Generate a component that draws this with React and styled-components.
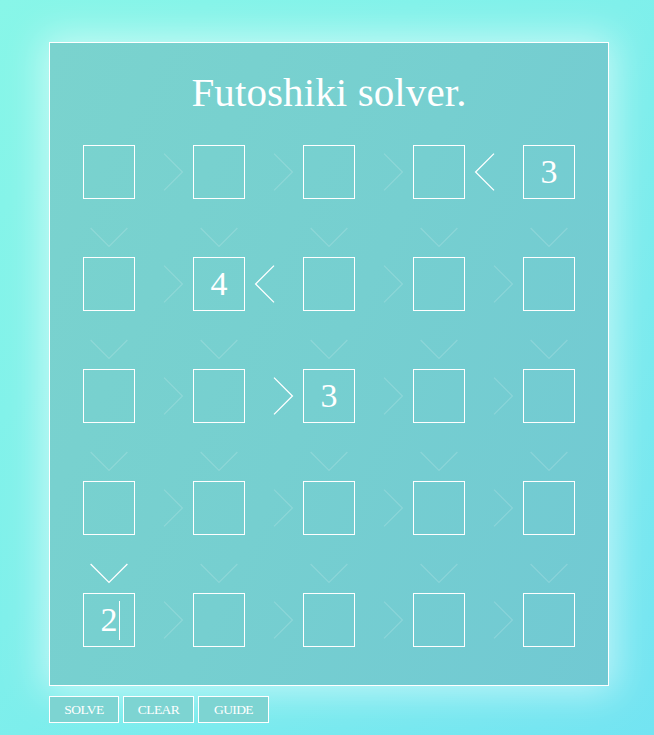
import styled, { createGlobalStyle } from 'styled-components';

const GlobalStyle = createGlobalStyle`
html, body {
    margin: 0;
    min-height: 100%;
}
body {
    min-height: 100vh;
    background: linear-gradient(135deg, #88f6e8 0%, #7ff0eb 45%, #73e4f2 100%);
    font-family: "Liberation Serif", "Times New Roman", serif;
    color: #fff;
}
`;

const Wrapper = styled.div`
padding: 42px 0 12px 49px;
`,
    Panel = styled.div`
width: 558px;
border: 1px solid #fff;
background: linear-gradient(115deg, #7ad3ce 0%, #76cfd0 50%, #71c9d3 100%);
box-shadow: 0 0 36px 6px rgba(255, 255, 255, 0.55);
padding: 29px 0 38px;
`,
    Title = styled.h1`
margin: 0 0 33px;
text-align: center;
font-weight: 400;
font-size: 41px;
line-height: 40px;
letter-spacing: 0.1px;
`,
    Board = styled.div`
display: grid;
grid-template-columns: repeat(4, 52px 58px) 52px;
grid-template-rows: repeat(4, 54px 58px) 54px;
justify-content: center;
`,
    Cell = styled.div`
box-sizing: border-box;
border: 1px solid #fff;
display: flex;
align-items: center;
justify-content: center;
font-size: 34px;
line-height: 34px;
`,
    Caret = styled.span`
display: inline-block;
width: 1px;
height: 39px;
margin-left: 1px;
margin-right: -2px;
background: #fff;
`,
    Link = styled.div`
display: flex;
align-items: center;
justify-content: center;
svg {
    display: block;
    stroke: #fff;
    stroke-width: 1.3;
    fill: none;
    opacity: ${props => (props.$active ? 1 : 0.16)};
}
`,
    Empty = styled.div``,
    Buttons = styled.div`
display: flex;
gap: 4px;
margin-top: 10px;
`,
    Button = styled.button`
box-sizing: border-box;
width: ${props => props.$w}px;
height: 27px;
padding: 0;
border: 1.5px solid #fff;
background: #7dd4d2;
color: #fff;
font-family: "Liberation Serif", "Times New Roman", serif;
font-size: 13.5px;
letter-spacing: -0.6px;
text-transform: uppercase;
cursor: pointer;
`;

const values = [
    ['', '', '', '', '3'],
    ['', '4', '', '', ''],
    ['', '', '3', '', ''],
    ['', '', '', '', ''],
    ['2', '', '', '', ''],
];

// horizontal links: '>' '<' ; active marks which is on
const hLinks = [
    [['>', 0], ['>', 0], ['>', 0], ['<', 1]],
    [['>', 0], ['<', 1], ['>', 0], ['>', 0]],
    [['>', 0], ['>', 1], ['>', 0], ['>', 0]],
    [['>', 0], ['>', 0], ['>', 0], ['>', 0]],
    [['>', 0], ['>', 0], ['>', 0], ['>', 0]],
];

const vLinks = [
    [0, 0, 0, 0, 0],
    [0, 0, 0, 0, 0],
    [0, 0, 0, 0, 0],
    [1, 0, 0, 0, 0],
];

function Chevron({ dir, active, horizontal }) {
    if (horizontal) {
        const pts = dir === '>' ? '29,8.6 47.4,27 29,45.4' : '29,8.6 10.6,27 29,45.4';
        return (
            <Link $active={active}>
                <svg width="58" height="54" viewBox="0 0 58 54"><polyline points={pts} /></svg>
            </Link>
        );
    }
    return (
        <Link $active={active}>
            <svg width="52" height="58" viewBox="0 0 52 58"><polyline points="7.6,29 26,47.4 44.4,29" /></svg>
        </Link>
    );
}

export default function App() {
    const items = [];
    for (let r = 0; r < 5; r++) {
        for (let c = 0; c < 5; c++) {
            const focused = r === 4 && c === 0;
            items.push(
                <Cell key={`c${r}${c}`}>
                    {values[r][c]}
                    {focused && <Caret />}
                </Cell>
            );
            if (c < 4) {
                const [dir, on] = hLinks[r][c];
                items.push(<Chevron key={`h${r}${c}`} horizontal dir={dir} active={!!on} />);
            }
        }
        if (r < 4) {
            for (let c = 0; c < 5; c++) {
                items.push(<Chevron key={`v${r}${c}`} active={!!vLinks[r][c]} />);
                if (c < 4) items.push(<Empty key={`e${r}${c}`} />);
            }
        }
    }

    return (
        <>
            <GlobalStyle />
            <Wrapper>
                <Panel>
                    <Title>Futoshiki solver.</Title>
                    <Board>{items}</Board>
                </Panel>
                <Buttons>
                    <Button $w={70}>Solve</Button>
                    <Button $w={71}>Clear</Button>
                    <Button $w={71}>Guide</Button>
                </Buttons>
            </Wrapper>
        </>
    );
}
